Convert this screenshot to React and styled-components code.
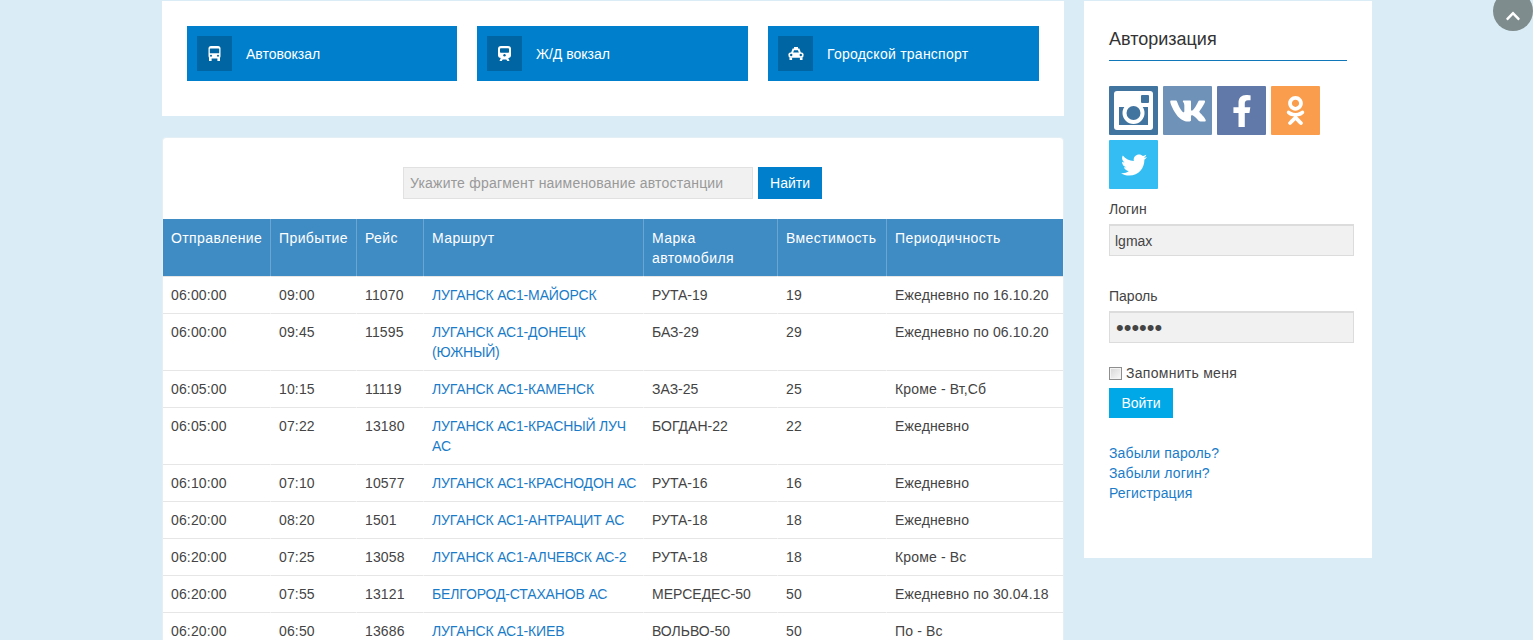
import styled, { createGlobalStyle } from 'styled-components'
import { FaVk, FaFacebookF, FaOdnoklassniki, FaTwitter, FaChevronUp } from 'react-icons/fa'

const GlobalStyle = createGlobalStyle`
  html, body {
    margin: 0;
    height: 100%;
    overflow: hidden;
    background: #daedf6;
  }
  body {
    font-family: "Liberation Sans", Arial, sans-serif;
    font-size: 14px;
    line-height: 20px;
    color: #444;
  }
`

const Page = styled.div`
  display: flex;
  align-items: flex-start;
  gap: 20px;
  padding: 1px 0 0 162px;
`

const Main = styled.main`
  width: 902px;
  display: flex;
  flex-direction: column;
  gap: 21px;
`

const Links = styled.section`
  display: grid;
  grid-template-columns: 270px 271px 271px;
  gap: 20px;
  padding: 25px 25px 35px;
  background: #fff;
`

const TransportLink = styled.a`
  display: flex;
  align-items: center;
  gap: 14px;
  height: 55px;
  padding-left: 10px;
  background: #0080cc;
  color: #fff;
  letter-spacing: ${p => p.$spacing}px;
`

const TransportIcon = styled.span`
  display: flex;
  align-items: center;
  justify-content: center;
  width: 35px;
  height: 35px;
  background: #0066a3;
`

const Schedule = styled.section`
  background: #fff;
  border: 1px solid #e4eff5;
  border-radius: 4px;
  padding-top: 29px;
`

const SearchForm = styled.form`
  display: flex;
  justify-content: center;
  gap: 5px;
  margin: 0 1px 20px 0;
`

const SearchInput = styled.input`
  box-sizing: border-box;
  width: 350px;
  height: 32px;
  padding: 0 6px;
  background: #f1f1f1;
  border: 1px solid #e1e1e1;
  font: inherit;
  letter-spacing: 0.2px;
  color: #444;
  &::placeholder {
    color: #999;
    opacity: 1;
  }
`

const SearchButton = styled.button`
  width: 64px;
  height: 32px;
  padding: 0;
  border: 0;
  background: #0080cc;
  color: #fff;
  font: inherit;
`

const Table = styled.table`
  width: 900px;
  table-layout: fixed;
  border-collapse: separate;
  border-spacing: 0;
`

const HeadCell = styled.th`
  padding: 9px 8px 8px;
  height: 40px;
  background: #3f8bc4;
  border-left: 1px solid #6ba5d1;
  color: #fff;
  font-weight: 400;
  letter-spacing: 0.4px;
  text-align: left;
  vertical-align: top;
  &:first-child {
    border-left: 0;
  }
`

const Cell = styled.td`
  padding: 8px 4px 8px 8px;
  border-left: 1px solid transparent;
  border-top: 1px solid #e6e6e6;
  letter-spacing: ${p => (p.$tight ? '0' : '0.15px')};
  vertical-align: top;
  &:first-child {
    border-left: 0;
  }
`

const RouteLink = styled.a`
  color: #1a7cc8;
  letter-spacing: -0.15px;
`

const Sidebar = styled.aside`
  box-sizing: border-box;
  width: 288px;
  height: 557px;
  padding: 26px 25px 25px;
  background: #fff;
`

const Title = styled.h3`
  margin: 0 0 25px;
  padding-bottom: 9px;
  border-bottom: 1px solid #1078b8;
  font-size: 18px;
  line-height: 24px;
  font-weight: 400;
  color: #333;
`

const Socials = styled.div`
  display: flex;
  flex-wrap: wrap;
  gap: 5px;
  margin-bottom: 10px;
`

const SocialTile = styled.a`
  display: flex;
  align-items: center;
  justify-content: center;
  width: 49px;
  height: 49px;
  border-radius: 1px;
  background: ${p => p.$bg};
  color: #fff;
  font-size: ${p => p.$size}px;
`

const FieldLabel = styled.label`
  display: block;
  margin-bottom: 5px;
`

const TextInput = styled.input`
  display: block;
  box-sizing: border-box;
  width: 245px;
  height: 32px;
  margin-bottom: 30px;
  padding: 0 6px 0 5px;
  background: #f1f1f1;
  border: 1px solid #dcdcdc;
  border-width: 2px 1px 1px;
  font: inherit;
  color: #444;
  &[type='password'] {
    font-size: 22px;
    padding: 0 6px;
  }
`

const Remember = styled.label`
  display: flex;
  align-items: center;
  gap: 4px;
  margin: -10px 0 5px;
  height: 20px;
  letter-spacing: 0.28px;
`

const Checkbox = styled.input`
  appearance: none;
  box-sizing: border-box;
  width: 13px;
  height: 13px;
  margin: 1px 0 0;
  border: 1px solid #8e8e8e;
  box-shadow: inset 0 0 0 1px #f4f4f4;
  background: linear-gradient(135deg, #d6d6d6, #fafafa);
`

const LoginButton = styled.button`
  display: block;
  width: 64px;
  height: 30px;
  padding: 0;
  border: 0;
  background: #00a8e8;
  color: #fff;
  font: inherit;
`

const HelpLinks = styled.div`
  display: flex;
  flex-direction: column;
  margin-top: 25px;
`

const HelpLink = styled.a`
  color: #1a7cc8;
  letter-spacing: 0.15px;
`

const ScrollTop = styled.button`
  position: fixed;
  top: -9px;
  right: 0;
  display: flex;
  align-items: center;
  justify-content: center;
  width: 40px;
  height: 40px;
  padding: 9px 0 0;
  border: 0;
  border-radius: 50%;
  background: #7f8c8d;
  color: #fff;
  font-size: 16px;
`

const BusIcon = () => (
  <svg width="13" height="15" viewBox="0 0 13 15">
    <rect x="0.5" y="0" width="12" height="12.5" rx="2.5" fill="#fff" />
    <rect x="1.8" y="2.6" width="9.4" height="4.6" rx="0.5" fill="#0066a3" />
    <circle cx="3" cy="9.8" r="1" fill="#0066a3" />
    <circle cx="10" cy="9.8" r="1" fill="#0066a3" />
    <rect x="1" y="12" width="2.6" height="3" fill="#fff" />
    <rect x="9.4" y="12" width="2.6" height="3" fill="#fff" />
  </svg>
)

const TrainIcon = () => (
  <svg width="13" height="15" viewBox="0 0 13 15">
    <rect x="0" y="0" width="13" height="12" rx="3" fill="#fff" />
    <rect x="2" y="2.2" width="9" height="4.6" rx="0.8" fill="#0066a3" />
    <circle cx="6.5" cy="9.3" r="1.2" fill="#0066a3" />
    <path d="M3 11.5 L1.5 15 h2.2 l1-1.5 h3.6 l1 1.5 h2.2 L10 11.5 z" fill="#fff" />
  </svg>
)

const TaxiIcon = () => (
  <svg width="16" height="13" viewBox="0 0 16 13">
    <rect x="6" y="0" width="4" height="2" fill="#fff" />
    <path d="M3 6 L4.6 1.6 h6.8 L13 6 z" fill="#fff" />
    <path d="M5 6 L6 3.2 h4 L11 6 z" fill="#0066a3" />
    <rect x="0.5" y="5.5" width="15" height="5.2" rx="1.8" fill="#fff" />
    <circle cx="3.2" cy="8" r="1.2" fill="#0066a3" />
    <circle cx="12.8" cy="8" r="1.2" fill="#0066a3" />
    <rect x="1.5" y="10.5" width="2.6" height="2.5" fill="#fff" />
    <rect x="11.9" y="10.5" width="2.6" height="2.5" fill="#fff" />
  </svg>
)

const InstagramIcon = () => (
  <svg width="49" height="49" viewBox="0 0 49 49">
    <rect x="5" y="5" width="39" height="39" rx="3" fill="#fff" />
    <rect x="10" y="21" width="29" height="18" fill="#41759f" />
    <circle cx="24.5" cy="27" r="11" fill="#fff" />
    <circle cx="24.5" cy="27" r="7" fill="#41759f" />
    <rect x="32" y="9" width="8" height="8" rx="1" fill="#41759f" />
  </svg>
)

const transport = [
  { label: 'Автовокзал', Icon: BusIcon, spacing: 0 },
  { label: 'Ж/Д вокзал', Icon: TrainIcon, spacing: 0 },
  { label: 'Городской транспорт', Icon: TaxiIcon, spacing: 0.25 },
]

const columns = [
  { title: 'Отправление', width: 107 },
  { title: 'Прибытие', width: 86 },
  { title: 'Рейс', width: 67 },
  { title: 'Маршрут', width: 220 },
  { title: 'Марка автомобиля', width: 134 },
  { title: 'Вместимость', width: 109 },
  { title: 'Периодичность', width: 177 },
]

const rows = [
  ['06:00:00', '09:00', '11070', 'ЛУГАНСК АС1-МАЙОРСК', 'РУТА-19', '19', 'Ежедневно по 16.10.20'],
  ['06:00:00', '09:45', '11595', 'ЛУГАНСК АС1-ДОНЕЦК (ЮЖНЫЙ)', 'БАЗ-29', '29', 'Ежедневно по 06.10.20'],
  ['06:05:00', '10:15', '11119', 'ЛУГАНСК АС1-КАМЕНСК', 'ЗАЗ-25', '25', 'Кроме - Вт,Сб'],
  ['06:05:00', '07:22', '13180', 'ЛУГАНСК АС1-КРАСНЫЙ ЛУЧ АС', 'БОГДАН-22', '22', 'Ежедневно'],
  ['06:10:00', '07:10', '10577', 'ЛУГАНСК АС1-КРАСНОДОН АС', 'РУТА-16', '16', 'Ежедневно'],
  ['06:20:00', '08:20', '1501', 'ЛУГАНСК АС1-АНТРАЦИТ АС', 'РУТА-18', '18', 'Ежедневно'],
  ['06:20:00', '07:25', '13058', 'ЛУГАНСК АС1-АЛЧЕВСК АС-2', 'РУТА-18', '18', 'Кроме - Вс'],
  ['06:20:00', '07:55', '13121', 'БЕЛГОРОД-СТАХАНОВ АС', 'МЕРСЕДЕС-50', '50', 'Ежедневно по 30.04.18'],
  ['06:20:00', '06:50', '13686', 'ЛУГАНСК АС1-КИЕВ', 'ВОЛЬВО-50', '50', 'По - Вс'],
]

export default function App() {
  return (
    <>
      <GlobalStyle />
      <Page>
        <Main>
          <Links>
            {transport.map(({ label, Icon, spacing }) => (
              <TransportLink key={label} $spacing={spacing}>
                <TransportIcon><Icon /></TransportIcon>
                {label}
              </TransportLink>
            ))}
          </Links>
          <Schedule>
            <SearchForm>
              <SearchInput placeholder="Укажите фрагмент наименование автостанции" />
              <SearchButton type="button">Найти</SearchButton>
            </SearchForm>
            <Table>
              <colgroup>
                {columns.map(col => <col key={col.title} width={col.width} />)}
              </colgroup>
              <thead>
                <tr>
                  {columns.map(col => <HeadCell key={col.title}>{col.title}</HeadCell>)}
                </tr>
              </thead>
              <tbody>
                {rows.map(row => (
                  <tr key={row[2]}>
                    {row.map((value, i) => (
                      <Cell key={i} $tight={i === 4}>
                        {i === 3 ? <RouteLink>{value}</RouteLink> : value}
                      </Cell>
                    ))}
                  </tr>
                ))}
              </tbody>
            </Table>
          </Schedule>
        </Main>
        <Sidebar>
          <Title>Авторизация</Title>
          <Socials>
            <SocialTile $bg="#41759f" $size={49}><InstagramIcon /></SocialTile>
            <SocialTile $bg="#6f92b8" $size={38}><FaVk /></SocialTile>
            <SocialTile $bg="#6079a9" $size={32}><FaFacebookF /></SocialTile>
            <SocialTile $bg="#fa9e4d" $size={29}><FaOdnoklassniki /></SocialTile>
            <SocialTile $bg="#33bdf2" $size={26}><FaTwitter /></SocialTile>
          </Socials>
          <FieldLabel>Логин</FieldLabel>
          <TextInput defaultValue="lgmax" />
          <FieldLabel>Пароль</FieldLabel>
          <TextInput type="password" defaultValue="secret" />
          <Remember>
            <Checkbox type="checkbox" />
            Запомнить меня
          </Remember>
          <LoginButton type="button">Войти</LoginButton>
          <HelpLinks>
            <HelpLink>Забыли пароль?</HelpLink>
            <HelpLink>Забыли логин?</HelpLink>
            <HelpLink>Регистрация</HelpLink>
          </HelpLinks>
        </Sidebar>
      </Page>
      <ScrollTop type="button"><FaChevronUp /></ScrollTop>
    </>
  )
}
